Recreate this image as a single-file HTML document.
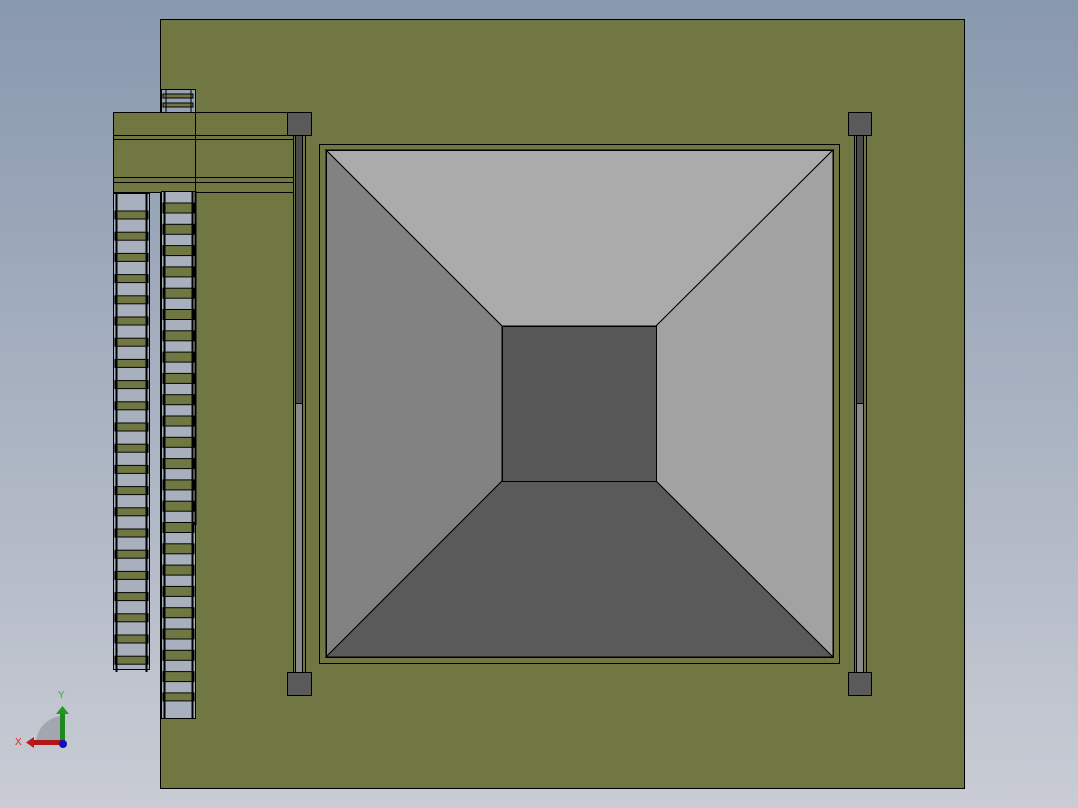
<!DOCTYPE html>
<html><head><style>
html,body{margin:0;padding:0;width:1078px;height:808px;overflow:hidden;}
body{background:linear-gradient(#8898ae,#c9ccd4);}
</style></head><body>
<svg width="1078" height="808" xmlns="http://www.w3.org/2000/svg" style="position:absolute;left:0;top:0">
<rect x="160.5" y="19.5" width="804" height="769" fill="#717743" stroke="#000"/>
<!-- top small ladder -->
<rect x="161.5" y="89.5" width="34" height="23" fill="#95a1b4" stroke="#000"/>
<rect x="163" y="94" width="30" height="4" fill="#717743" stroke="#000"/>
<rect x="163" y="103" width="30" height="4" fill="#717743" stroke="#000"/>
<line x1="166" y1="89" x2="166" y2="112" stroke="#000"/><line x1="191" y1="89" x2="191" y2="112" stroke="#000"/>
<!-- platform -->
<rect x="113.5" y="112.5" width="181" height="80" fill="#717743" stroke="#000"/>
<line x1="113" y1="135.5" x2="294" y2="135.5" stroke="#000"/>
<line x1="113" y1="139.5" x2="294" y2="139.5" stroke="#000"/>
<line x1="113" y1="177.5" x2="294" y2="177.5" stroke="#000"/>
<line x1="113" y1="182.5" x2="294" y2="182.5" stroke="#000"/>
<line x1="195.5" y1="112" x2="195.5" y2="193" stroke="#000"/>
<!-- left ladder -->
<rect x="113.5" y="193.5" width="36" height="476" fill="#a9b0bd" stroke="#000"/>
<g fill="#717743" stroke="#000">
<rect x="115" y="211" width="33" height="8"/><rect x="115" y="232.2" width="33" height="8"/><rect x="115" y="253.4" width="33" height="8"/><rect x="115" y="274.6" width="33" height="8"/><rect x="115" y="295.8" width="33" height="8"/><rect x="115" y="317" width="33" height="8"/><rect x="115" y="338.2" width="33" height="8"/><rect x="115" y="359.4" width="33" height="8"/><rect x="115" y="380.6" width="33" height="8"/><rect x="115" y="401.8" width="33" height="8"/><rect x="115" y="423" width="33" height="8"/><rect x="115" y="444.2" width="33" height="8"/><rect x="115" y="465.4" width="33" height="8"/><rect x="115" y="486.6" width="33" height="8"/><rect x="115" y="507.8" width="33" height="8"/><rect x="115" y="529" width="33" height="8"/><rect x="115" y="550.2" width="33" height="8"/><rect x="115" y="571.4" width="33" height="8"/><rect x="115" y="592.6" width="33" height="8"/><rect x="115" y="613.8" width="33" height="8"/><rect x="115" y="635" width="33" height="8"/><rect x="115" y="656.2" width="33" height="8"/>
</g>
<line x1="116.5" y1="193" x2="116.5" y2="672" stroke="#000" stroke-width="2"/>
<line x1="146.5" y1="193" x2="146.5" y2="672" stroke="#000" stroke-width="2"/>
<!-- right ladder -->
<rect x="161.5" y="191.5" width="34" height="527" fill="#a9b0bd" stroke="#000"/>
<g fill="#717743" stroke="#000">
<rect x="163" y="203" width="31" height="10"/><rect x="163" y="224.3" width="31" height="10"/><rect x="163" y="245.6" width="31" height="10"/><rect x="163" y="266.9" width="31" height="10"/><rect x="163" y="288.2" width="31" height="10"/><rect x="163" y="309.5" width="31" height="10"/><rect x="163" y="330.8" width="31" height="10"/><rect x="163" y="352.1" width="31" height="10"/><rect x="163" y="373.4" width="31" height="10"/><rect x="163" y="394.7" width="31" height="10"/><rect x="163" y="416" width="31" height="10"/><rect x="163" y="437.3" width="31" height="10"/><rect x="163" y="458.6" width="31" height="10"/><rect x="163" y="479.9" width="31" height="10"/><rect x="163" y="501.2" width="31" height="10"/><rect x="163" y="522.5" width="31" height="10"/><rect x="163" y="543.8" width="31" height="10"/><rect x="163" y="565.1" width="31" height="10"/><rect x="163" y="586.4" width="31" height="10"/><rect x="163" y="607.7" width="31" height="10"/><rect x="163" y="629" width="31" height="10"/><rect x="163" y="650.3" width="31" height="10"/><rect x="163" y="671.6" width="31" height="10"/><rect x="163" y="692.9" width="31" height="8"/>
</g>
<line x1="164.5" y1="191" x2="164.5" y2="719" stroke="#000" stroke-width="2"/>
<line x1="192.5" y1="191" x2="192.5" y2="719" stroke="#000" stroke-width="2"/>
<line x1="195.5" y1="191" x2="195.5" y2="525" stroke="#000" stroke-width="2"/>
<!-- columns -->
<g stroke="#000">
<rect x="293.5" y="135.5" width="12" height="537" fill="#717743"/>
<rect x="295.5" y="135.5" width="7" height="268" fill="#4a4a4a"/>
<rect x="295.5" y="403.5" width="7" height="269" fill="#8a8a8a"/>
<rect x="287.5" y="112.5" width="24" height="23" fill="#5a5a5a"/>
<rect x="287.5" y="672.5" width="24" height="23" fill="#5a5a5a"/>
<rect x="854.5" y="135.5" width="12" height="537" fill="#717743"/>
<rect x="856.5" y="135.5" width="7" height="268" fill="#4a4a4a"/>
<rect x="856.5" y="403.5" width="7" height="269" fill="#8a8a8a"/>
<rect x="848.5" y="112.5" width="23" height="23" fill="#5a5a5a"/>
<rect x="848.5" y="672.5" width="23" height="23" fill="#5a5a5a"/>
<rect x="319.5" y="144.5" width="520" height="519" fill="#717743"/>
<polygon points="326,150 833,150 656,326 502,326" fill="#ababab"/>
<polygon points="326,150 502,326 502,481 326,657" fill="#828282"/>
<polygon points="833,150 833,657 656,481 656,326" fill="#a2a2a2"/>
<polygon points="326,657 502,481 656,481 833,657" fill="#5a5a5a"/>
<rect x="502.5" y="326.5" width="154" height="155" fill="#575757"/>
<rect x="326.5" y="150.5" width="507" height="507" fill="none"/>
</g>
<!-- axis triad -->
<path d="M36 742 A28 28 0 0 1 62 716 L62 742 Z" fill="#9a9ea6" opacity="0.8"/>
<rect x="60" y="713" width="5" height="30" fill="#1f8a1f"/>
<polygon points="56,714 62.5,706 69,714" fill="#1f9a1f"/>
<rect x="33" y="740" width="30" height="5" fill="#b01818"/>
<polygon points="34,737 26,742.5 34,748" fill="#c01818"/>
<circle cx="63" cy="744" r="4" fill="#1010c0"/>
<text x="58" y="698" font-family="Liberation Sans,sans-serif" font-size="10" fill="#20c020">Y</text>
<text x="15" y="745" font-family="Liberation Sans,sans-serif" font-size="10" fill="#e02020">X</text>
</svg>
</body></html>
